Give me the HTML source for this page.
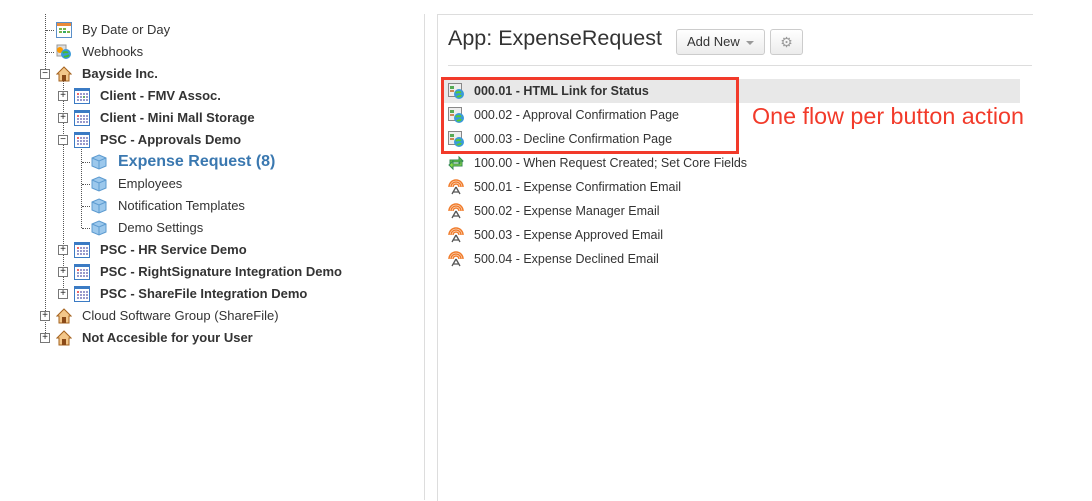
<!DOCTYPE html>
<html><head><meta charset="utf-8"><style>
body{margin:0;width:1092px;height:500px;background:#fff;position:relative;overflow:hidden;font-family:"Liberation Sans",Arial,sans-serif;color:#333}
.t{position:absolute;left:0;top:1px;width:430px;height:500px}
.r{position:absolute;height:22px;line-height:22px;font-size:13px;white-space:nowrap}
.b{font-weight:bold}
.ic{position:absolute;width:16px;height:16px}
.vd{position:absolute;border-left:1px dotted #555;width:0}
.hd{position:absolute;border-top:1px dotted #555;height:0}
.pm{position:absolute;width:8px;height:8px;border:1px solid #777;background:#fff;font-size:10px;line-height:8px;text-align:center;color:#222}
.row{position:absolute;left:444px;width:576px;height:24px;line-height:24px;font-size:12.5px;white-space:nowrap}
.row span{position:absolute;left:30px}
.row svg{position:absolute;left:4px;top:4px}
</style></head><body>
<div style="position:absolute;left:424px;top:14px;width:1px;height:486px;background:#ddd"></div>
<div style="position:absolute;left:437px;top:14px;width:595px;height:486px;border-left:1px solid #ddd;border-top:1px solid #ddd"></div>

<div class="t">
<div class="vd" style="left:45px;top:13px;height:323px"></div>
<div class="vd" style="left:63px;top:80px;height:213px"></div>
<div class="vd" style="left:81px;top:146px;height:81px"></div>

<div class="hd" style="left:46px;top:29px;width:8px"></div>
<svg class="ic" style="left:56px;top:21px" viewBox="0 0 16 16"><rect x="0.5" y="0.5" width="15" height="15" fill="#fff" stroke="#5b8fc9"/><rect x="1" y="1" width="14" height="3" fill="#e98a3a"/><rect x="3" y="6" width="3" height="2" fill="#7bb64a"/><rect x="7" y="6" width="3" height="2" fill="#7bb64a"/><rect x="3" y="9" width="3" height="2" fill="#7bb64a"/><rect x="7" y="9" width="3" height="2" fill="#3a6"/><rect x="11" y="9" width="3" height="2" fill="#7bb64a"/></svg>
<div class="r" style="left:82px;top:18px">By Date or Day</div>
<div class="hd" style="left:46px;top:51px;width:8px"></div>
<svg class="ic" style="left:56px;top:43px" viewBox="0 0 16 16"><rect x="1" y="1" width="9" height="11" fill="#ddd" stroke="#999"/><circle cx="4" cy="6" r="3" fill="#f90"/><circle cx="10" cy="10" r="5" fill="#3a9ad9"/><path d="M7 9c2-2 4 0 5-1M8 13c2-1 3 0 5-2" stroke="#4b3" stroke-width="2" fill="none"/></svg>
<div class="r" style="left:82px;top:40px">Webhooks</div>

<div class="pm" style="left:40px;top:68px">−</div>
<svg class="ic" style="left:56px;top:65px" viewBox="0 0 16 16"><path d="M8 1L1 8h2v7h10V8h2z" fill="#f3c78a" stroke="#a5631f"/><rect x="6" y="9" width="4" height="6" fill="#8a4a18"/></svg>
<div class="r b" style="left:82px;top:62px">Bayside Inc.</div>

<div class="pm" style="left:58px;top:90px">+</div>
<svg class="ic" style="left:74px;top:87px" viewBox="0 0 16 16"><rect x="0.5" y="0.5" width="15" height="15" fill="#fff" stroke="#3b7bc4"/><rect x="1" y="1" width="14" height="2" fill="#3b7bc4"/><g fill="#e66"><rect x="3" y="5" width="2" height="2"/><rect x="9" y="8" width="2" height="2" fill="#6a6"/></g><g fill="#99c"><rect x="6" y="5" width="2" height="2"/><rect x="9" y="5" width="2" height="2"/><rect x="12" y="5" width="2" height="2"/><rect x="3" y="8" width="2" height="2"/><rect x="6" y="8" width="2" height="2"/><rect x="12" y="8" width="2" height="2"/><rect x="3" y="11" width="2" height="2"/><rect x="6" y="11" width="2" height="2"/><rect x="9" y="11" width="2" height="2"/><rect x="12" y="11" width="2" height="2"/></g></svg>
<div class="r b" style="left:100px;top:84px">Client - FMV Assoc.</div>
<div class="pm" style="left:58px;top:112px">+</div>
<svg class="ic" style="left:74px;top:109px" viewBox="0 0 16 16"><rect x="0.5" y="0.5" width="15" height="15" fill="#fff" stroke="#3b7bc4"/><rect x="1" y="1" width="14" height="2" fill="#3b7bc4"/><g fill="#e66"><rect x="3" y="5" width="2" height="2"/></g><g fill="#99c"><rect x="6" y="5" width="2" height="2"/><rect x="9" y="5" width="2" height="2"/><rect x="12" y="5" width="2" height="2"/><rect x="3" y="8" width="2" height="2"/><rect x="6" y="8" width="2" height="2"/><rect x="9" y="8" width="2" height="2"/><rect x="12" y="8" width="2" height="2"/><rect x="3" y="11" width="2" height="2"/><rect x="6" y="11" width="2" height="2"/><rect x="9" y="11" width="2" height="2"/><rect x="12" y="11" width="2" height="2"/></g></svg>
<div class="r b" style="left:100px;top:106px">Client - Mini Mall Storage</div>
<div class="pm" style="left:58px;top:134px">−</div>
<svg class="ic" style="left:74px;top:131px" viewBox="0 0 16 16"><rect x="0.5" y="0.5" width="15" height="15" fill="#fff" stroke="#3b7bc4"/><rect x="1" y="1" width="14" height="2" fill="#3b7bc4"/><g fill="#e66"><rect x="3" y="5" width="2" height="2"/></g><g fill="#99c"><rect x="6" y="5" width="2" height="2"/><rect x="9" y="5" width="2" height="2"/><rect x="12" y="5" width="2" height="2"/><rect x="3" y="8" width="2" height="2"/><rect x="6" y="8" width="2" height="2"/><rect x="9" y="8" width="2" height="2"/><rect x="12" y="8" width="2" height="2"/><rect x="3" y="11" width="2" height="2"/><rect x="6" y="11" width="2" height="2"/><rect x="9" y="11" width="2" height="2"/><rect x="12" y="11" width="2" height="2"/></g></svg>
<div class="r b" style="left:100px;top:128px">PSC - Approvals Demo</div>

<div class="hd" style="left:82px;top:161px;width:8px"></div>
<svg class="ic" style="left:91px;top:153px" viewBox="0 0 16 16"><path d="M8 1L15 4v8l-7 3-7-3V4z" fill="#9cc8ec" stroke="#5d9bd0"/><path d="M1 4l7 3 7-3M8 7v8" stroke="#5d9bd0" fill="none"/></svg>
<div class="r b" style="left:118px;top:149px;font-size:16px;color:#3a78b0;line-height:24px">Expense Request (8)</div>
<div class="hd" style="left:82px;top:183px;width:8px"></div>
<svg class="ic" style="left:91px;top:175px" viewBox="0 0 16 16"><path d="M8 1L15 4v8l-7 3-7-3V4z" fill="#9cc8ec" stroke="#5d9bd0"/><path d="M1 4l7 3 7-3M8 7v8" stroke="#5d9bd0" fill="none"/></svg>
<div class="r" style="left:118px;top:172px">Employees</div>
<div class="hd" style="left:82px;top:205px;width:8px"></div>
<svg class="ic" style="left:91px;top:197px" viewBox="0 0 16 16"><path d="M8 1L15 4v8l-7 3-7-3V4z" fill="#9cc8ec" stroke="#5d9bd0"/><path d="M1 4l7 3 7-3M8 7v8" stroke="#5d9bd0" fill="none"/></svg>
<div class="r" style="left:118px;top:194px">Notification Templates</div>
<div class="hd" style="left:82px;top:227px;width:8px"></div>
<svg class="ic" style="left:91px;top:219px" viewBox="0 0 16 16"><path d="M8 1L15 4v8l-7 3-7-3V4z" fill="#9cc8ec" stroke="#5d9bd0"/><path d="M1 4l7 3 7-3M8 7v8" stroke="#5d9bd0" fill="none"/></svg>
<div class="r" style="left:118px;top:216px">Demo Settings</div>

<div class="pm" style="left:58px;top:244px">+</div>
<svg class="ic" style="left:74px;top:241px" viewBox="0 0 16 16"><rect x="0.5" y="0.5" width="15" height="15" fill="#fff" stroke="#3b7bc4"/><rect x="1" y="1" width="14" height="2" fill="#3b7bc4"/><g fill="#e66"><rect x="3" y="5" width="2" height="2"/></g><g fill="#99c"><rect x="6" y="5" width="2" height="2"/><rect x="9" y="5" width="2" height="2"/><rect x="12" y="5" width="2" height="2"/><rect x="3" y="8" width="2" height="2"/><rect x="6" y="8" width="2" height="2"/><rect x="9" y="8" width="2" height="2"/><rect x="12" y="8" width="2" height="2"/><rect x="3" y="11" width="2" height="2"/><rect x="6" y="11" width="2" height="2"/><rect x="9" y="11" width="2" height="2"/><rect x="12" y="11" width="2" height="2"/></g></svg>
<div class="r b" style="left:100px;top:238px">PSC - HR Service Demo</div>
<div class="pm" style="left:58px;top:266px">+</div>
<svg class="ic" style="left:74px;top:263px" viewBox="0 0 16 16"><rect x="0.5" y="0.5" width="15" height="15" fill="#fff" stroke="#3b7bc4"/><rect x="1" y="1" width="14" height="2" fill="#3b7bc4"/><g fill="#e66"><rect x="3" y="5" width="2" height="2"/></g><g fill="#99c"><rect x="6" y="5" width="2" height="2"/><rect x="9" y="5" width="2" height="2"/><rect x="12" y="5" width="2" height="2"/><rect x="3" y="8" width="2" height="2"/><rect x="6" y="8" width="2" height="2"/><rect x="9" y="8" width="2" height="2"/><rect x="12" y="8" width="2" height="2"/><rect x="3" y="11" width="2" height="2"/><rect x="6" y="11" width="2" height="2"/><rect x="9" y="11" width="2" height="2"/><rect x="12" y="11" width="2" height="2"/></g></svg>
<div class="r b" style="left:100px;top:260px">PSC - RightSignature Integration Demo</div>
<div class="pm" style="left:58px;top:288px">+</div>
<svg class="ic" style="left:74px;top:285px" viewBox="0 0 16 16"><rect x="0.5" y="0.5" width="15" height="15" fill="#fff" stroke="#3b7bc4"/><rect x="1" y="1" width="14" height="2" fill="#3b7bc4"/><g fill="#e66"><rect x="3" y="5" width="2" height="2"/></g><g fill="#99c"><rect x="6" y="5" width="2" height="2"/><rect x="9" y="5" width="2" height="2"/><rect x="12" y="5" width="2" height="2"/><rect x="3" y="8" width="2" height="2"/><rect x="6" y="8" width="2" height="2"/><rect x="9" y="8" width="2" height="2"/><rect x="12" y="8" width="2" height="2"/><rect x="3" y="11" width="2" height="2"/><rect x="6" y="11" width="2" height="2"/><rect x="9" y="11" width="2" height="2"/><rect x="12" y="11" width="2" height="2"/></g></svg>
<div class="r b" style="left:100px;top:282px">PSC - ShareFile Integration Demo</div>

<div class="pm" style="left:40px;top:310px">+</div>
<svg class="ic" style="left:56px;top:307px" viewBox="0 0 16 16"><path d="M8 1L1 8h2v7h10V8h2z" fill="#f3c78a" stroke="#a5631f"/><rect x="6" y="9" width="4" height="6" fill="#8a4a18"/></svg>
<div class="r" style="left:82px;top:304px">Cloud Software Group (ShareFile)</div>
<div class="pm" style="left:40px;top:332px">+</div>
<svg class="ic" style="left:56px;top:329px" viewBox="0 0 16 16"><path d="M8 1L1 8h2v7h10V8h2z" fill="#f3c78a" stroke="#a5631f"/><rect x="6" y="9" width="4" height="6" fill="#8a4a18"/></svg>
<div class="r b" style="left:82px;top:326px">Not Accesible for your User</div>
</div>

<div style="position:absolute;left:448px;top:23px;font-size:21.5px;color:#333;line-height:30px">App: ExpenseRequest</div>
<div style="position:absolute;left:676px;top:29px;width:89px;height:26px;border:1px solid #ccc;border-radius:3px;background:linear-gradient(#fff,#ececec);font-size:13px;line-height:24px;box-sizing:border-box;padding-left:10px">Add New <span style="display:inline-block;border-left:4px solid transparent;border-right:4px solid transparent;border-top:4px solid #999;vertical-align:middle;margin-left:3px"></span></div>
<div style="position:absolute;left:770px;top:29px;width:33px;height:26px;box-sizing:border-box;border:1px solid #ccc;border-radius:3px;background:linear-gradient(#fff,#ececec);text-align:center;line-height:24px;color:#999;font-size:14px">⚙</div>
<div style="position:absolute;left:448px;top:65px;width:584px;height:1px;background:#ddd"></div>

<div class="row b" style="top:79px;background:#e8e8e8"><svg width="16" height="16" viewBox="0 0 16 16"><rect x="0.5" y="0.5" width="13" height="13" fill="#eee" stroke="#888"/><rect x="2" y="3" width="4" height="3" fill="#5a5"/><rect x="2" y="7" width="4" height="2" fill="#c85"/><circle cx="11" cy="11" r="5" fill="#3a9ad9"/><path d="M8 10c2-2 3 0 5-1M9 14c1-1 3 0 4-2" stroke="#5c3" stroke-width="2" fill="none"/></svg><span>000.01 - HTML Link for Status</span></div>
<div class="row" style="top:103px"><svg width="16" height="16" viewBox="0 0 16 16"><rect x="0.5" y="0.5" width="13" height="13" fill="#eee" stroke="#888"/><rect x="2" y="3" width="4" height="3" fill="#5a5"/><rect x="2" y="7" width="4" height="2" fill="#c85"/><circle cx="11" cy="11" r="5" fill="#3a9ad9"/><path d="M8 10c2-2 3 0 5-1M9 14c1-1 3 0 4-2" stroke="#5c3" stroke-width="2" fill="none"/></svg><span>000.02 - Approval Confirmation Page</span></div>
<div class="row" style="top:127px"><svg width="16" height="16" viewBox="0 0 16 16"><rect x="0.5" y="0.5" width="13" height="13" fill="#eee" stroke="#888"/><rect x="2" y="3" width="4" height="3" fill="#5a5"/><rect x="2" y="7" width="4" height="2" fill="#c85"/><circle cx="11" cy="11" r="5" fill="#3a9ad9"/><path d="M8 10c2-2 3 0 5-1M9 14c1-1 3 0 4-2" stroke="#5c3" stroke-width="2" fill="none"/></svg><span>000.03 - Decline Confirmation Page</span></div>
<div class="row" style="top:151px"><svg width="16" height="16" viewBox="0 0 16 16"><path d="M2 5h9V2l4 4-4 4V7H4v3H2z" fill="#6c3" stroke="#385"/><path d="M14 11H5v3l-4-4 4-4v3h7V6h2z" fill="#8d4" stroke="#385"/></svg><span>100.00 - When Request Created; Set Core Fields</span></div>
<div class="row" style="top:175px"><svg width="16" height="16" viewBox="0 0 16 16"><path d="M3 8a5 5 0 0 1 10 0M1 8a7 7 0 0 1 14 0M5 8a3 3 0 0 1 6 0" stroke="#f07b2a" stroke-width="1.5" fill="none"/><path d="M8 8L4 15M8 8l4 7M5.5 13h5" stroke="#555" stroke-width="1.3" fill="none"/></svg><span>500.01 - Expense Confirmation Email</span></div>
<div class="row" style="top:199px"><svg width="16" height="16" viewBox="0 0 16 16"><path d="M3 8a5 5 0 0 1 10 0M1 8a7 7 0 0 1 14 0M5 8a3 3 0 0 1 6 0" stroke="#f07b2a" stroke-width="1.5" fill="none"/><path d="M8 8L4 15M8 8l4 7M5.5 13h5" stroke="#555" stroke-width="1.3" fill="none"/></svg><span>500.02 - Expense Manager Email</span></div>
<div class="row" style="top:223px"><svg width="16" height="16" viewBox="0 0 16 16"><path d="M3 8a5 5 0 0 1 10 0M1 8a7 7 0 0 1 14 0M5 8a3 3 0 0 1 6 0" stroke="#f07b2a" stroke-width="1.5" fill="none"/><path d="M8 8L4 15M8 8l4 7M5.5 13h5" stroke="#555" stroke-width="1.3" fill="none"/></svg><span>500.03 - Expense Approved Email</span></div>
<div class="row" style="top:247px"><svg width="16" height="16" viewBox="0 0 16 16"><path d="M3 8a5 5 0 0 1 10 0M1 8a7 7 0 0 1 14 0M5 8a3 3 0 0 1 6 0" stroke="#f07b2a" stroke-width="1.5" fill="none"/><path d="M8 8L4 15M8 8l4 7M5.5 13h5" stroke="#555" stroke-width="1.3" fill="none"/></svg><span>500.04 - Expense Declined Email</span></div>

<div style="position:absolute;left:441px;top:77px;width:298px;height:77px;box-sizing:border-box;border:3px solid #f23a2a"></div>
<div style="position:absolute;left:752px;top:102px;font-size:23.3px;color:#f23a2a;line-height:28px;white-space:nowrap">One flow per button action</div>
</body></html>
